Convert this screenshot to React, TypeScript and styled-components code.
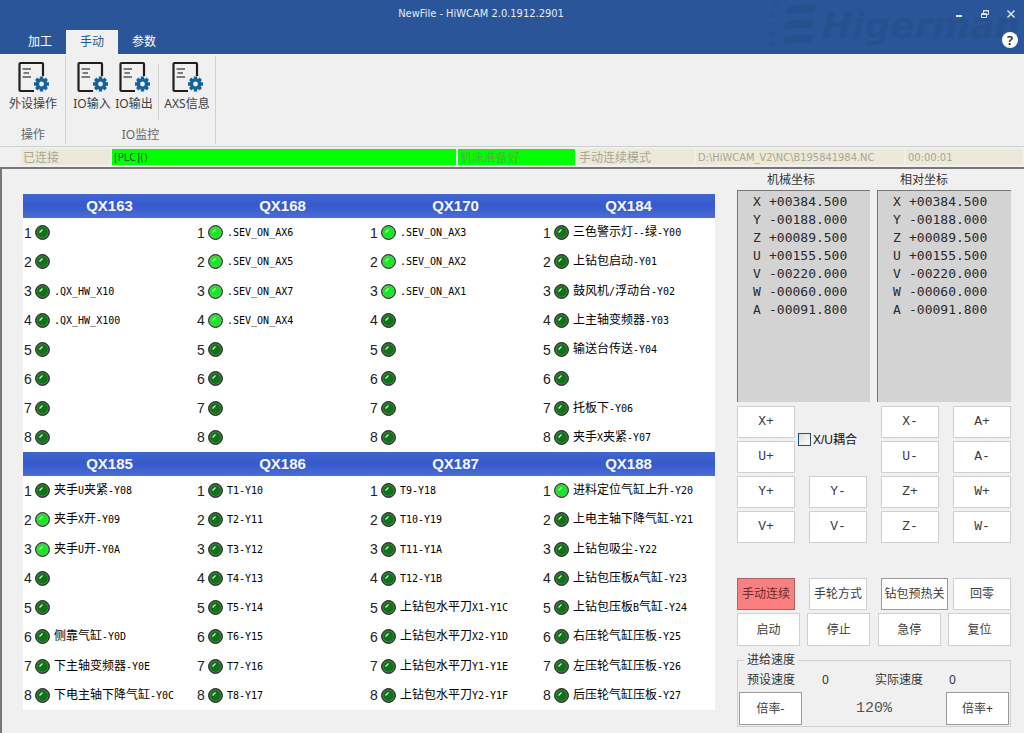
import React from "react";
import styled, { createGlobalStyle } from "styled-components";

const Global = createGlobalStyle`
  * { box-sizing: border-box; }
  html, body, #root { height: 100%; }
  body { margin: 0; background: #f0f0f0; color: #404040; font: 12px/16px "Noto Sans", "Noto Sans CJK SC", sans-serif; }
  button, input { font: inherit; color: inherit; }
`;
const mono = `"Liberation Mono", "Noto Sans CJK SC", monospace`;
const narrow = `"DejaVu Sans Condensed", "DejaVu Sans", "Noto Sans CJK SC", sans-serif`;
const digits = `"DejaVu Sans Mono", "Noto Sans CJK SC", monospace`;

const Page = styled.div`display: flex; flex-direction: column; min-height: 100%;`;
const Header = styled.header`position: relative; display: flex; flex-direction: column; justify-content: space-between; height: 54px; background: #2a5699; color: #fff; overflow: hidden;`;
const TitleRow = styled.div`position: relative; z-index: 1; display: flex; height: 28px; align-items: center;`;
const Title = styled.h1`flex: 1; margin: 0; padding-left: 14px; text-align: center; font: 11px/16px ${narrow}; color: #e4ebf5;`;
const WindowButtons = styled.div`display: flex; gap: 4px; padding-right: 2px;`;
const WindowButton = styled.button`display: grid; place-items: center; width: 22px; height: 22px; padding: 0; border: 0; background: none; color: #dbe4f1;`;
const TabRow = styled.nav`position: relative; z-index: 1; display: flex; align-items: flex-end; padding-left: 14px;`;
const Tab = styled.button<{ $active?: boolean }>`width: 52px; height: 24px; padding: 0; border: 0; background: ${p => (p.$active ? "#f0f0f0" : "none")}; color: ${p => (p.$active ? "#1c6094" : "#fff")};`;
const Help = styled.button`display: grid; place-items: center; width: 16px; height: 16px; margin: 0 6px 6px auto; padding: 0; border: 0; border-radius: 50%; background: #fff; color: #222; font-size: 13px; font-weight: 600; line-height: 16px;`;
const Watermark = styled.svg`position: absolute; right: 0; top: 0; width: 256px; height: 54px;`;

const Ribbon = styled.div`display: flex; height: 93px; padding: 2px 0 2px 1px; border-bottom: 1px solid #d0d0d0;`;
const Group = styled.section`display: flex; flex-direction: column; justify-content: space-between; border-right: 1px solid #d2d2d2;`;
const Tools = styled.div<{ $tight?: boolean }>`display: flex; padding: 0 ${p => (p.$tight ? 1 : 5)}px 0 5px;`;
const Tool = styled.button<{ $wide?: boolean }>`display: flex; flex-direction: column; align-items: center; gap: 3px; width: ${p => (p.$wide ? 54 : 42)}px; padding: 5px 0 0; border: 0; background: none; white-space: nowrap;`;
const ToolRule = styled.div`width: 1px; height: 56px; margin: 8px 1px 0 3px; background: #d2d2d2;`;
const GroupName = styled.h2`margin: 0; text-align: center; font-size: 12px; font-weight: 400; line-height: 18px; color: #666;`;

const StatusBar = styled.div`display: flex; height: 22px; padding: 2px 0 2px 21px; border-bottom: 2px solid #777; color: #a9a695;`;
const Status = styled.div<{ $w?: number; $on?: boolean; $ink?: string; $narrow?: boolean }>`flex: ${p => (p.$w ? `0 0 ${p.$w}px` : "1")}; padding: 0 2px; border-right: 2px solid #f0f0ea; background: ${p => (p.$on ? "#00ff00" : "#ece9d8")}; color: ${p => p.$ink || "inherit"}; line-height: 18px; white-space: nowrap; overflow: hidden; ${p => p.$narrow && `font: 11px/18px ${narrow};`}`;

const Main = styled.main`display: flex; flex: 1; gap: 22px; padding: 0 13px 7px 21px; border-left: 2px solid #777;`;
const Signals = styled.div`flex: 1; margin: 25px 0 14px; align-self: flex-start; background: #fff;`;
const Band = styled.div`display: grid; grid-template-columns: repeat(4, 1fr); height: 24px; background: linear-gradient(#4067cf, #3659cd 50%, #4a6ed4);`;
const BandName = styled.h2`margin: 0; text-align: center; font: bold 15px/24px "Liberation Sans", sans-serif; color: #f4f8ff;`;
const Blocks = styled.div`display: grid; grid-template-columns: repeat(4, 1fr); height: 234px;`;
const Block = styled.ol`display: grid; grid-template-rows: repeat(8, 1fr); margin: 0; padding: 0; list-style: none;`;
const Signal = styled.li`display: flex; align-items: center; white-space: nowrap; color: #000; font: 12px/16px ${digits};`;
const Index = styled.span`width: 12px; padding-left: 1px; font: 14px/16px "Liberation Sans", sans-serif; color: #222;`;
const SignalName = styled.span`padding-left: 4px;`;
const Half = styled.span`font-size: 10px;`;

const Side = styled.aside`display: flex; flex-direction: column; width: 274px;`;
const Readouts = styled.div`display: grid; grid-template-columns: 133px 1fr; gap: 7px;`;
const ReadoutName = styled.h2<{ $inset: number }>`margin: 0 0 1px; padding: 2px 0 0 ${p => p.$inset}px; font-size: 12px; font-weight: 400; line-height: 18px; color: #333;`;
const Readout = styled.dl`height: 212px; margin: 0; padding: 2px 0 0 15px; border-top: 1px solid #777; border-left: 1px solid #777; background: #d3d3d3; color: #2a2a2a; font: 13px/18px ${digits};`;
const Axis = styled.div`display: flex; dt { width: 16px; } dd { margin: 0; }`;
const Jog = styled.div`display: grid; grid-template-columns: repeat(4, 58px); grid-auto-rows: 32px; justify-content: space-between; row-gap: 3px; margin-top: 4px;`;
const Push = styled.button<{ $tone?: "hot" | "dark"; $mono?: boolean; $w?: number }>`
  width: ${p => (p.$w ? `${p.$w}px` : "100%")}; height: 100%; padding: 0; white-space: nowrap;
  border: 1px solid ${p => (p.$tone === "hot" ? "#b06060" : p.$tone === "dark" ? "#9a9a9a" : "#cfcfcf")};
  background: ${p => (p.$tone === "hot" ? "#fa8080" : "#fff")};
  color: ${p => (p.$tone === "hot" ? "#6a2c2c" : "#3c3c3c")};
  ${p => p.$mono && `font: 13px/16px ${mono};`}
`;
const Couple = styled.label`grid-column: 2; grid-row: 1 / 3; display: flex; align-items: center; gap: 2px; margin-left: -11px; white-space: nowrap; color: #111; font: 12px/16px "Liberation Sans", "Noto Sans CJK SC", sans-serif;
  input { appearance: none; width: 13px; height: 13px; margin: 0; border: 1px solid #1c5180; background: linear-gradient(135deg, #dcdcd7, #fff); }`;
const Modes = styled(Jog)`margin-top: 35px;`;
const Runs = styled(Jog)`grid-template-columns: repeat(4, 63px); grid-auto-rows: 33px; margin-top: 3px;`;
const Feed = styled.fieldset`display: grid; grid-template-columns: 63px 1fr 63px; align-items: center; margin: 6px 0 0; padding: 0 1px 1px; border: 1px solid #d0d0d0;
  legend { margin-left: 5px; padding: 0 3px; line-height: 16px; color: #333; }`;
const Speeds = styled.div`grid-column: 1 / 4; display: grid; grid-template-columns: 75px 53px 74px 1fr; padding-left: 8px; height: 24px; align-items: center; color: #333;`;
const FeedButton = styled(Push)`height: 33px;`;
const Rate = styled.output`text-align: center; color: #555; font: 15px/20px ${mono};`;

const Mixed = ({ text }: { text: string }) => (
  <>{text.split(/([\x20-\x7e]+)/).filter(Boolean).map((t, i) => (/^[\x20-\x7e]/.test(t) ? <Half key={i}>{t}</Half> : t))}</>
);

const Led = ({ on }: { on: boolean }) => (
  <svg width="15" height="15" viewBox="0 0 15 15" aria-label={on ? "on" : "off"}>
    <circle cx="7.5" cy="7.5" r="6.9" fill={on ? "#5fbf5f" : "#4c714c"} stroke="#0a1a0a" />
    <circle cx="7.5" cy="7.5" r="5" fill={on ? "#14ea22" : "#0c7414"} />
    <path d="M4.500 7.500 7.500 4.500" stroke={on ? "#baf8b4" : "#d8f0d8"} strokeWidth="1.300" />
  </svg>
);

const ToolIcon = () => (
  <svg width="32" height="32" viewBox="0 0 32 32" fill="none" aria-hidden="true">
    <path d="M17 30H3.500a1 1 0 0 1-1-1V3a1 1 0 0 1 1-1H25a1 1 0 0 1 1 1V15" stroke="#1f1f1f" strokeWidth="2.200" />
    <path d="M5.500 8h8.500M6.500 12h5.500M5.500 16h8.500" stroke="#555" strokeWidth="1.300" />
    <g stroke="#14639c" strokeWidth="3.400">
      <path d="M24.500 15.500v15M17 23h15M19.200 17.700l10.600 10.600M29.800 17.700 19.200 28.300" />
    </g>
    <circle cx="24.500" cy="23" r="5.800" fill="#14639c" />
    <circle cx="24.500" cy="23" r="2.400" fill="#f0f0f0" />
  </svg>
);

const bands: { names: string[]; rows: string[][]; lit: string[] }[] = [
  {
    names: ["QX163", "QX168", "QX170", "QX184"],
    rows: [
      ["", "", ".QX_HW_X10", ".QX_HW_X100", "", "", "", ""],
      [".SEV_ON_AX6", ".SEV_ON_AX5", ".SEV_ON_AX7", ".SEV_ON_AX4", "", "", "", ""],
      [".SEV_ON_AX3", ".SEV_ON_AX2", ".SEV_ON_AX1", "", "", "", "", ""],
      ["三色警示灯--绿-Y00", "上钻包启动-Y01", "鼓风机/浮动台-Y02", "上主轴变频器-Y03", "输送台传送-Y04", "", "托板下-Y06", "夹手X夹紧-Y07"],
    ],
    lit: ["", "1234", "123", ""],
  },
  {
    names: ["QX185", "QX186", "QX187", "QX188"],
    rows: [
      ["夹手U夹紧-Y08", "夹手X开-Y09", "夹手U开-Y0A", "", "", "侧靠气缸-Y0D", "下主轴变频器-Y0E", "下电主轴下降气缸-Y0C"],
      ["T1-Y10", "T2-Y11", "T3-Y12", "T4-Y13", "T5-Y14", "T6-Y15", "T7-Y16", "T8-Y17"],
      ["T9-Y18", "T10-Y19", "T11-Y1A", "T12-Y1B", "上钻包水平刀X1-Y1C", "上钻包水平刀X2-Y1D", "上钻包水平刀Y1-Y1E", "上钻包水平刀Y2-Y1F"],
      ["进料定位气缸上升-Y20", "上电主轴下降气缸-Y21", "上钻包吸尘-Y22", "上钻包压板A气缸-Y23", "上钻包压板B气缸-Y24", "右压轮气缸压板-Y25", "左压轮气缸压板-Y26", "后压轮气缸压板-Y27"],
    ],
    lit: ["23", "", "", "1"],
  },
];
const readouts = [{ name: "机械坐标", inset: 30 }, { name: "相对坐标", inset: 23 }];
const axes = [["X", "+00384.500"], ["Y", "-00188.000"], ["Z", "+00089.500"], ["U", "+00155.500"], ["V", "-00220.000"], ["W", "-00060.000"], ["A", "-00091.800"]];
const jogKeys = ["X+", "couple", "X-", "A+", "U+", "", "U-", "A-", "Y+", "Y-", "Z+", "W+", "V+", "V-", "Z-", "W-"];

export default function App() {
  return (
    <Page>
      <Global />
      <Header>
        <Watermark viewBox="0 0 256 54" aria-hidden="true">
          <g fill="#27508f">
            <path d="M20 7q14-4 28-2l-3 8q-14-1-27 2zM18 22q14-4 28-2l-3 8q-14-1-27 2zM17 37q14-4 28-2l-3 8q-14-1-27 2z" />
            <path d="M5 3h5v5H5zM2 13h5v5H2zM5 22h5v5H5zM2 32h5v5H2zM2 42h5v5H2z" opacity=".6" />
            <text x="54" y="38" fontFamily="DejaVu Sans" fontSize="36" fontWeight="700" fontStyle="italic">Higerman</text>
          </g>
        </Watermark>
        <TitleRow>
          <Title>NewFile - HiWCAM 2.0.1912.2901</Title>
          <WindowButtons>
            <WindowButton aria-label="Minimize"><svg width="10" height="10"><path d="M2 7h6" stroke="currentColor" strokeWidth="2" /></svg></WindowButton>
            <WindowButton aria-label="Restore"><svg width="10" height="10" fill="none" stroke="currentColor"><path d="M1.500 4.500h5v4h-5zM1 5.500h6M3.500 4V1.500h5v4H7M3 2h6" /></svg></WindowButton>
            <WindowButton aria-label="Close"><svg width="10" height="10"><path d="M1.500 1.500l7 7M8.500 1.500l-7 7" stroke="currentColor" strokeWidth="1.500" /></svg></WindowButton>
          </WindowButtons>
        </TitleRow>
        <TabRow>
          <Tab>加工</Tab><Tab $active>手动</Tab><Tab>参数</Tab>
          <Help aria-label="Help">?</Help>
        </TabRow>
      </Header>
      <Ribbon>
        <Group>
          <Tools><Tool $wide><ToolIcon />外设操作</Tool></Tools>
          <GroupName>操作</GroupName>
        </Group>
        <Group>
          <Tools $tight>
            <Tool><ToolIcon />IO输入</Tool>
            <Tool><ToolIcon />IO输出</Tool>
            <ToolRule />
            <Tool $wide><ToolIcon />AXS信息</Tool>
          </Tools>
          <GroupName>IO监控</GroupName>
        </Group>
      </Ribbon>
      <StatusBar>
        <Status $w={91}>已连接</Status>
        <Status $w={346} $on $narrow $ink="#185018">[PLC]()</Status>
        <Status $w={119} $on $ink="#4fb43f">机床准备好</Status>
        <Status $w={119}>手动连续模式</Status>
        <Status $w={210} $narrow>D:\HiWCAM_V2\NC\B195841984.NC</Status>
        <Status $narrow>00:00:01</Status>
      </StatusBar>
      <Main>
        <Signals>
          {bands.map((band, b) => (
            <React.Fragment key={b}>
              <Band>{band.names.map(n => <BandName key={n}>{n}</BandName>)}</Band>
              <Blocks>
                {band.rows.map((rows, c) => (
                  <Block key={c}>
                    {rows.map((name, i) => (
                      <Signal key={i}>
                        <Index>{i + 1}</Index>
                        <Led on={band.lit[c].includes(String(i + 1))} />
                        <SignalName><Mixed text={name} /></SignalName>
                      </Signal>
                    ))}
                  </Block>
                ))}
              </Blocks>
            </React.Fragment>
          ))}
        </Signals>
        <Side>
          <Readouts>
            {readouts.map(r => (
              <section key={r.name}>
                <ReadoutName $inset={r.inset}>{r.name}</ReadoutName>
                <Readout>
                  {axes.map(([a, v]) => <Axis key={a}><dt>{a}</dt><dd>{v}</dd></Axis>)}
                </Readout>
              </section>
            ))}
          </Readouts>
          <Jog>
            {jogKeys.map(k =>
              k === "couple" ? <Couple key={k}><input type="checkbox" />X/U耦合</Couple>
                : k && <Push key={k} $mono>{k}</Push>
            )}
          </Jog>
          <Modes>
            <Push $tone="hot">手动连续</Push><Push>手轮方式</Push><Push $tone="dark" $w={67}>钻包预热关</Push><Push>回零</Push>
          </Modes>
          <Runs>
            {["启动", "停止", "急停", "复位"].map(t => <Push key={t}>{t}</Push>)}
          </Runs>
          <Feed>
            <legend>进给速度</legend>
            <Speeds><span>预设速度</span><span>0</span><span>实际速度</span><span>0</span></Speeds>
            <FeedButton $tone="dark">倍率-</FeedButton>
            <Rate>120%</Rate>
            <FeedButton $tone="dark">倍率+</FeedButton>
          </Feed>
        </Side>
      </Main>
    </Page>
  );
}
